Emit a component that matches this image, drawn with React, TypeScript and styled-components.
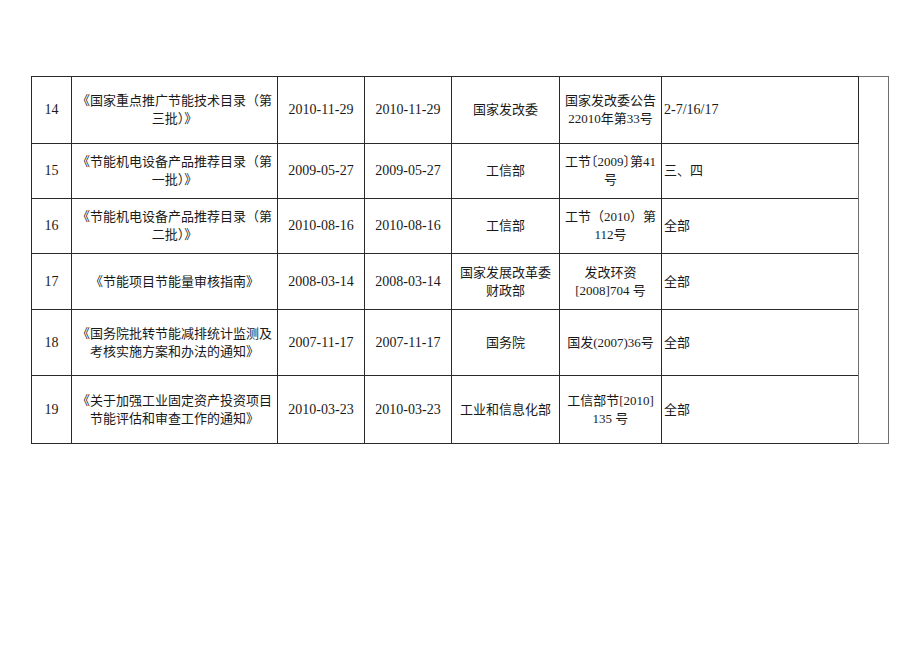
import React from "react";
import styled, { createGlobalStyle } from "styled-components";

const GlobalStyle = createGlobalStyle`
  html, body {
    margin: 0;
    padding: 0;
    background: #ffffff;
  }
  body {
    font-family: "Liberation Serif", "Noto Sans CJK SC", serif;
    color: #1a1a1a;
  }
`;

const Page = styled.main`
  padding: 76px 0 0 31px;
`;

const Table = styled.table`
  border-collapse: collapse;
  table-layout: fixed;
  width: 858px;
  border: 1px solid #6f6f6f;
  font-size: 13px;
  line-height: 18px;
`;

const Row = styled.tr<{ $h: number }>`
  height: ${({ $h }) => $h}px;
`;

const Cell = styled.td<{ $align?: "left" | "center"; $latin?: boolean }>`
  border: 1px solid #2a2a2a;
  padding: 0 2px;
  vertical-align: middle;
  text-align: ${({ $align }) => $align ?? "center"};
  font-size: ${({ $latin }) => ($latin ? "14px" : "13px")};
  white-space: nowrap;
  overflow: hidden;
`;

const DocCell = styled(Cell)`
  padding: 0;
`;

/* half-width CJK brackets, as in the printed original */
const Narrow = styled.span`
  font-feature-settings: "halt";
`;

const SpareCell = styled.td`
  border: 1px solid #6f6f6f;
  padding: 0;
`;

type Item = {
  no: string;
  title: React.ReactNode;
  issued: string;
  effective: string;
  dept: React.ReactNode;
  doc: React.ReactNode;
  scope: string;
  latinScope?: boolean;
  h: number;
};

const items: Item[] = [
  {
    no: "14",
    title: (
      <>
        《国家重点推广节能技术目录（第
        <br />
        三批）》
      </>
    ),
    issued: "2010-11-29",
    effective: "2010-11-29",
    dept: "国家发改委",
    doc: (
      <>
        国家发改委公告
        <br />
        22010年第33号
      </>
    ),
    scope: "2-7/16/17",
    latinScope: true,
    h: 67,
  },
  {
    no: "15",
    title: (
      <>
        《节能机电设备产品推荐目录（第
        <br />
        一批）》
      </>
    ),
    issued: "2009-05-27",
    effective: "2009-05-27",
    dept: "工信部",
    doc: (
      <>
        工节<Narrow>〔</Narrow>2009<Narrow>〕</Narrow>第41
        <br />号
      </>
    ),
    scope: "三、四",
    h: 55,
  },
  {
    no: "16",
    title: (
      <>
        《节能机电设备产品推荐目录（第
        <br />
        二批）》
      </>
    ),
    issued: "2010-08-16",
    effective: "2010-08-16",
    dept: "工信部",
    doc: (
      <>
        工节（2010）第
        <br />
        112号
      </>
    ),
    scope: "全部",
    h: 55,
  },
  {
    no: "17",
    title: "《节能项目节能量审核指南》",
    issued: "2008-03-14",
    effective: "2008-03-14",
    dept: (
      <>
        国家发展改革委
        <br />
        财政部
      </>
    ),
    doc: (
      <>
        发改环资
        <br />
        [2008]704 号
      </>
    ),
    scope: "全部",
    h: 56,
  },
  {
    no: "18",
    title: (
      <>
        《国务院批转节能减排统计监测及
        <br />
        考核实施方案和办法的通知》
      </>
    ),
    issued: "2007-11-17",
    effective: "2007-11-17",
    dept: "国务院",
    doc: "国发(2007)36号",
    scope: "全部",
    h: 66,
  },
  {
    no: "19",
    title: (
      <>
        《关于加强工业固定资产投资项目
        <br />
        节能评估和审查工作的通知》
      </>
    ),
    issued: "2010-03-23",
    effective: "2010-03-23",
    dept: "工业和信息化部",
    doc: (
      <>
        工信部节[2010]
        <br />
        135 号
      </>
    ),
    scope: "全部",
    h: 68,
  },
];

const widths = [40, 206, 87, 87, 108, 102, 197, 30];

const App: React.FC = () => {
  return (
    <>
      <GlobalStyle />
      <Page>
        <Table>
          <colgroup>
            {widths.map((w, i) => (
              <col key={i} style={{ width: w }} />
            ))}
          </colgroup>
          <tbody>
            {items.map((it, i) => (
              <Row key={it.no} $h={it.h}>
                <Cell $latin>{it.no}</Cell>
                <Cell>{it.title}</Cell>
                <Cell $latin>{it.issued}</Cell>
                <Cell $latin>{it.effective}</Cell>
                <Cell>{it.dept}</Cell>
                <DocCell>{it.doc}</DocCell>
                <Cell $align="left" $latin={it.latinScope}>
                  {it.scope}
                </Cell>
                {i === 0 && <SpareCell rowSpan={items.length} />}
              </Row>
            ))}
          </tbody>
        </Table>
      </Page>
    </>
  );
};

export default App;
